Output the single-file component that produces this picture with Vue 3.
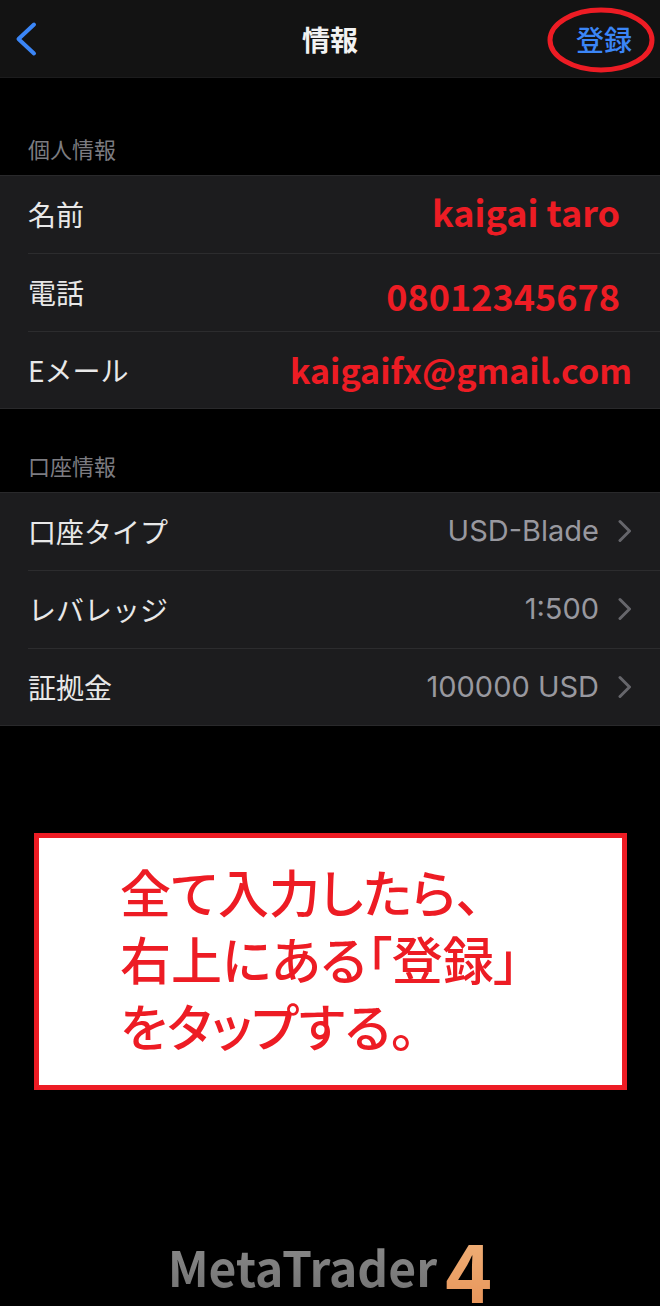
<script setup>
import { ref } from 'vue'

const fields = ref([
  { id: 'name', label: '名前', type: 'text', value: 'kaigai taro' },
  { id: 'phone', label: '電話', type: 'tel', value: '08012345678' },
  { id: 'email', label: 'Eメール', type: 'email', value: 'kaigaifx@gmail.com' },
])

const options = [
  { label: '口座タイプ', value: 'USD-Blade' },
  { label: 'レバレッジ', value: '1:500' },
  { label: '証拠金', value: '100000 USD' },
]
</script>

<template>
  <div class="screen">
    <header class="bar">
      <button class="back" type="button" aria-label="戻る">
        <svg width="22" height="36" viewBox="0 0 22 36" fill="none" stroke="#3b86f7" stroke-width="4" stroke-linecap="round" stroke-linejoin="round">
          <path d="M19 3.500 3.500 18 19 32.500" />
        </svg>
      </button>
      <h1 class="title">情報</h1>
      <button class="register" type="button">
        登録
        <svg class="ring" viewBox="0 0 108 66" fill="none" stroke="#ed1c24" stroke-width="5" aria-hidden="true">
          <ellipse cx="54" cy="33" rx="51" ry="30" />
        </svg>
      </button>
    </header>

    <main class="content">
      <section class="group">
        <h2 class="heading">個人情報</h2>
        <div class="list">
          <div v-for="f in fields" :key="f.id" class="row">
            <label class="label" :for="f.id">{{ f.label }}</label>
            <input :id="f.id" v-model="f.value" class="field" :class="f.id" :type="f.type" />
          </div>
        </div>
      </section>

      <section class="group account">
        <h2 class="heading">口座情報</h2>
        <div class="list">
          <button v-for="o in options" :key="o.label" class="row" type="button">
            <span class="label">{{ o.label }}</span>
            <span class="value">{{ o.value }}</span>
            <svg class="chevron" width="14" height="24" viewBox="0 0 14 24" fill="none" stroke="#66666b" stroke-width="3" stroke-linecap="round" stroke-linejoin="round">
              <path d="M2 2.500 11.500 12 2 21.500" />
            </svg>
          </button>
        </div>
      </section>

      <p class="callout">全て入力したら、<br />右上にある「登録」<br />をタップする。</p>
    </main>

    <footer class="brand"><span class="word">MetaTrader</span><span class="four">4</span></footer>
  </div>
</template>

<style>
body {
  margin: 0;
  background: #000;
}
</style>

<style scoped>
.screen {
  display: flex;
  flex-direction: column;
  min-height: 100vh;
  overflow: hidden;
  background: #000;
  color: #e8e8e8;
  font-family: "Noto Sans CJK JP", sans-serif;
}

button {
  margin: 0;
  padding: 0;
  border: 0;
  background: none;
  color: inherit;
  font: inherit;
  cursor: pointer;
}

.bar {
  display: grid;
  grid-template-columns: 1fr auto 1fr;
  align-items: center;
  height: 78px;
  padding: 0 28px 0 15px;
  box-sizing: border-box;
  background: #131313;
  border-bottom: 1px solid #1c1c1d;
}

.back {
  display: flex;
  justify-self: start;
}

.title {
  margin: 0 0 0 13px;
  font-size: 28px;
  line-height: 40px;
  font-weight: 700;
  color: #f2f2f2;
}

.register {
  position: relative;
  justify-self: end;
  font-size: 28px;
  line-height: 40px;
  font-weight: 500;
  color: #3b86f7;
}

.ring {
  position: absolute;
  top: -12px;
  left: -29px;
  width: 108px;
  height: 66px;
}

.group {
  padding-top: 56px;
}

.account {
  padding-top: 42px;
}

.heading {
  margin: 0;
  padding: 0 28px 12px;
  font-size: 22px;
  line-height: 29px;
  font-weight: 400;
  color: #7c7c81;
}

.list {
  background: #1c1c1e;
  box-shadow: inset 0 1px #29292b, inset 0 -1px #29292b;
}

.row {
  position: relative;
  display: flex;
  align-items: center;
  width: 100%;
  height: 78px;
  padding: 0 28px;
  box-sizing: border-box;
}

.row + .row::before {
  content: "";
  position: absolute;
  top: 0;
  left: 28px;
  right: 0;
  height: 1px;
  background: #2c2c2e;
}

.label {
  font-size: 28px;
  line-height: 40px;
  white-space: nowrap;
}

.field {
  flex: 1;
  min-width: 0;
  padding: 0 12px 6px 0;
  border: 0;
  outline: 0;
  background: none;
  color: #ed1c24;
  font-family: "Noto Sans CJK JP", sans-serif;
  font-size: 36px;
  line-height: 52px;
  font-weight: 700;
  text-align: right;
}

.phone {
  padding-top: 6px;
  padding-bottom: 0;
}

.email {
  padding-right: 0;
  padding-bottom: 0;
  font-size: 34px;
}

.value {
  margin-left: auto;
  font-family: Inter, sans-serif;
  font-size: 29px;
  line-height: 40px;
  color: #98989f;
}

.chevron {
  margin-left: 19px;
}

.callout {
  margin: 107px 33px 0 34px;
  padding: 20px 20px 26px 81px;
  border: 5px solid #ed1c24;
  background: #fff;
  color: #ed1c24;
  font-size: 51px;
  line-height: 67px;
  font-weight: 500;
  font-feature-settings: "palt";
}

.brand {
  display: flex;
  align-items: flex-start;
  justify-content: center;
  gap: 8px;
  margin-top: auto;
  font-weight: 700;
}

.word {
  font-size: 48px;
  line-height: 72px;
  background: linear-gradient(#8e8e8e, #707070);
  background-clip: text;
  color: transparent;
}

.four {
  font-size: 80px;
  line-height: 76px;
  background: linear-gradient(#f0b27a, #e8955a);
  background-clip: text;
  color: transparent;
}
</style>
